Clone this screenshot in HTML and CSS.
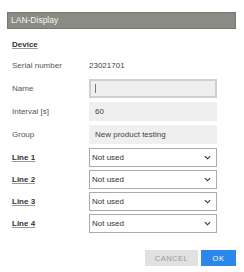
FILE: index.html
```html
<!DOCTYPE html>
<html lang="en">

<head>
    <meta charset="UTF-8">
    <title>LAN-Display</title>
    <link rel="stylesheet" href="styles.css">
</head>

<body>
    <div class="dialog">
        <div class="title-bar">LAN-Display</div>

        <div class="content">
            <div class="section-title">Device</div>

            <div class="row">
                <span class="label">Serial number</span>
                <span class="value">23021701</span>
            </div>
            <div class="row">
                <span class="label">Name</span>
                <div class="field field-active"><span class="caret"></span></div>
            </div>
            <div class="row">
                <span class="label">Interval [s]</span>
                <div class="field">60</div>
            </div>
            <div class="row">
                <span class="label">Group</span>
                <div class="field">New product testing</div>
            </div>

            <div class="row line-row">
                <span class="line-label">Line 1</span>
                <div class="select">Not used <svg class="chevron" viewBox="0 0 8 5"><path d="M1 1l3 3 3-3"/></svg></div>
            </div>
            <div class="row line-row">
                <span class="line-label">Line 2</span>
                <div class="select">Not used <svg class="chevron" viewBox="0 0 8 5"><path d="M1 1l3 3 3-3"/></svg></div>
            </div>
            <div class="row line-row">
                <span class="line-label">Line 3</span>
                <div class="select">Not used <svg class="chevron" viewBox="0 0 8 5"><path d="M1 1l3 3 3-3"/></svg></div>
            </div>
            <div class="row line-row">
                <span class="line-label">Line 4</span>
                <div class="select">Not used <svg class="chevron" viewBox="0 0 8 5"><path d="M1 1l3 3 3-3"/></svg></div>
            </div>
        </div>

        <div class="buttons">
            <button class="btn btn-cancel">CANCEL</button>
            <button class="btn btn-ok">OK</button>
        </div>
    </div>
</body>

</html>
```

FILE: styles.css
```css
body {
    margin: 0;
    background-color: #fff;
    font-family: 'Liberation Sans', Arial, sans-serif;
    font-size: 8px;
    color: #555;
}

.dialog {
    padding: 12px 8px 0 7px;
}

.title-bar {
    height: 15px;
    line-height: 15px;
    padding-left: 3px;
    background-color: #8b8b86;
    border: 1px solid #77776f;
    color: #f4f4f4;
    font-size: 8.5px;
}

.content {
    padding: 0 0 0 5px;
}

.section-title {
    margin-top: 11px;
    margin-bottom: 7px;
    color: #333;
    font-weight: bold;
    text-decoration: underline;
    text-decoration-color: #999;
}

.row {
    display: grid;
    grid-template-columns: 77px 128px;
    align-items: center;
    min-height: 19px;
    margin-bottom: 4px;
}

.value {
    color: #444;
}

.field {
    height: 19px;
    line-height: 19px;
    padding-left: 6px;
    background-color: #efefef;
    color: #444;
    box-sizing: border-box;
}

.field-active {
    border: 2px solid #cfcfcf;
    display: flex;
    align-items: center;
    padding-left: 4px;
}

.caret {
    width: 1px;
    height: 9px;
    background-color: #777;
}

.line-row {
    margin-bottom: 3px;
}

.line-label {
    color: #333;
    font-weight: bold;
    text-decoration: underline;
    text-decoration-color: #999;
}

.select {
    display: flex;
    align-items: center;
    justify-content: space-between;
    height: 19px;
    padding: 0 5px 0 2px;
    border: 1px solid #aaa;
    background-color: #fff;
    color: #333;
    box-sizing: border-box;
}

.chevron {
    width: 7px;
    height: 5px;
    fill: none;
    stroke: #333;
    stroke-width: 1.3;
}

.buttons {
    display: flex;
    justify-content: flex-end;
    gap: 3px;
    margin-top: 17px;
}

.btn {
    height: 16px;
    border: none;
    font-family: inherit;
    font-size: 7.5px;
    letter-spacing: 0.5px;
    padding: 0;
}

.btn-cancel {
    width: 53px;
    background-color: #e1e1e1;
    color: #9a9a9a;
}

.btn-ok {
    width: 35px;
    background-color: #2b87e9;
    color: #fff;
}
```
